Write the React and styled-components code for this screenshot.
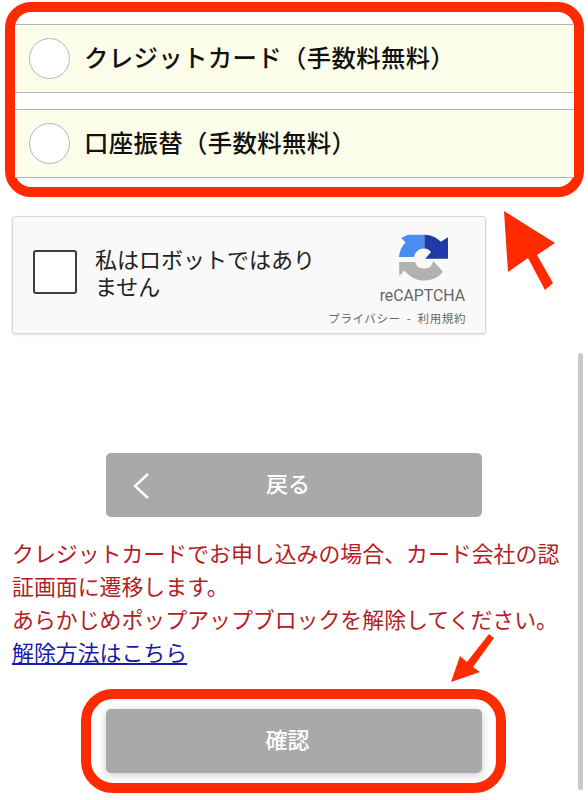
import React from "react";
import styled, { createGlobalStyle } from "styled-components";

const Global = createGlobalStyle`
  html, body {
    margin: 0;
    padding: 0;
    background: #fff;
  }
  * {
    box-sizing: border-box;
  }
`;

const Page = styled.div`
  position: relative;
  width: 588px;
  height: 800px;
  overflow: hidden;
  padding-top: 2px;
  background: #fff;
  font-family: "Noto Sans CJK JP", "Noto Sans", sans-serif;
`;

const Highlight = styled.div`
  border: 10px solid #ff2a00;
  border-radius: 26px;
  background: #fff;
`;

const PayFrame = styled(Highlight)`
  width: 579px;
  height: 195px;
  margin-left: 5px;
  padding-top: 12px;
  display: flex;
  flex-direction: column;
  gap: 16px;
`;

const PayRow = styled.label`
  height: 69px;
  display: flex;
  align-items: center;
  gap: 14px;
  padding-left: 14px;
  background: #fdfee9;
  border-top: 1px solid #b4b4b4;
  border-bottom: 1px solid #b4b4b4;
  font-size: 24.4px;
  font-weight: 500;
  letter-spacing: 0.35px;
  color: #111;
`;

const PayLabel = styled.span`
  margin-top: -4px;
  text-spacing-trim: space-all;
  white-space: nowrap;
`;

const Radio = styled.span`
  width: 41px;
  height: 41px;
  border-radius: 50%;
  background: #fff;
  border: 1px solid #b5b5b5;
  flex-shrink: 0;
`;

const Captcha = styled.div`
  width: 474px;
  height: 118px;
  margin: 19px 0 0 12px;
  padding: 33px 18px 0 20px;
  display: flex;
  background: #f9f9f9;
  border: 1px solid #d6d6d6;
  border-radius: 3px;
  box-shadow: 0 1px 3px rgba(0, 0, 0, 0.12);
`;

const CheckBox = styled.span`
  width: 44px;
  height: 44px;
  flex-shrink: 0;
  background: #fff;
  border: 2px solid #3f3f3f;
  border-radius: 3px;
`;

const CaptchaText = styled.div`
  width: 226px;
  margin: -5px 0 0 18px;
  font-size: 22px;
  line-height: 27px;
  color: #222;
`;

const CaptchaBrand = styled.div`
  position: relative;
  margin-left: auto;
  margin-top: -17px;
  display: flex;
  flex-direction: column;
  align-items: flex-end;
  color: #666;
`;

const LogoMark = styled.svg`
  margin-right: 19px;
`;

const BrandName = styled.div`
  font-family: Roboto, "Liberation Sans", sans-serif;
  font-size: 15.8px;
  line-height: 18px;
  margin-top: 5px;
  margin-right: 2px;
`;

const BrandLinks = styled.div`
  font-size: 11.5px;
  line-height: 16px;
  margin-top: 5px;
  margin-right: 1px;
  white-space: nowrap;
  word-spacing: 3px;
  letter-spacing: 0.6px;
`;

const GreyButton = styled.div`
  position: relative;
  width: 376px;
  height: 64px;
  padding: 0 12px 6px 0;
  display: flex;
  align-items: center;
  justify-content: center;
  background: #a9a9a9;
  border-radius: 5px;
  color: #fff;
  font-size: 22px;
  font-weight: 500;
`;

const BackButton = styled(GreyButton)`
  margin: 119px 0 0 106px;
`;

const Chevron = styled.svg`
  position: absolute;
  left: 26px;
  top: 19px;
`;

const Notice = styled.div`
  margin: 19px 0 0 12px;
  width: 552px;
  font-size: 21.9px;
  line-height: 33px;
  color: #b3201f;
`;

const HelpLink = styled.a`
  color: #1a1aa8;
  text-decoration: underline;
`;

const ConfirmFrame = styled(Highlight)`
  width: 425px;
  height: 104px;
  margin: 21px 0 0 81px;
  border-radius: 32px;
  display: flex;
  align-items: center;
  justify-content: center;
`;

const ConfirmButton = styled(GreyButton)`
  margin-top: -1px;
  box-shadow: 0 2px 8px rgba(0, 0, 0, 0.22);
`;

const Scrollbar = styled.div`
  position: absolute;
  left: 578px;
  top: 353px;
  width: 5px;
  height: 437px;
  background: #c9c9c9;
  border-radius: 3px;
`;

const ArrowLayer = styled.svg`
  position: absolute;
  left: 0;
  top: 0;
  pointer-events: none;
`;

function RecaptchaLogo() {
  return (
    <LogoMark width="49" height="49" viewBox="0 0 135 135">
      <path d="M0 66C1 50 8 36 18 26L6 14 25 5h45v38c-12 0-18 4-23 10-3 4-5 9-6 13z" fill="#4a8cf0" />
      <path d="M70 5c20 0 34 8 45 19l20-12v59H72l16-18c-3-6-10-10-18-10z" fill="#1f3aa6" />
      <path d="M0 80h45c2 8 4 12 12 16 8 4 22 2 30-4l8-14 26 29c-12 15-30 24-50 24-24 0-44-12-56-28L1 118z" fill="#b2b2b2" />
    </LogoMark>
  );
}

export default function App() {
  return (
    <Page>
      <Global />
      <PayFrame>
        <PayRow>
          <Radio />
          <PayLabel>クレジットカード（手数料無料）</PayLabel>
        </PayRow>
        <PayRow>
          <Radio />
          <PayLabel>口座振替（手数料無料）</PayLabel>
        </PayRow>
      </PayFrame>

      <Captcha>
        <CheckBox />
        <CaptchaText>私はロボットではありません</CaptchaText>
        <CaptchaBrand>
          <RecaptchaLogo />
          <BrandName>reCAPTCHA</BrandName>
          <BrandLinks>プライバシー - 利用規約</BrandLinks>
        </CaptchaBrand>
      </Captcha>

      <BackButton>
        <Chevron width="20" height="28" viewBox="0 0 20 28">
          <path d="M16 2L3 14l13 12" fill="none" stroke="#fff" strokeWidth="2.4" />
        </Chevron>
        戻る
      </BackButton>

      <Notice>
        クレジットカードでお申し込みの場合、カード会社の認証画面に遷移します。
        <br />
        あらかじめポップアップブロックを解除してください。
        <br />
        <HelpLink href="#">解除方法はこちら</HelpLink>
      </Notice>

      <ConfirmFrame>
        <ConfirmButton>確認</ConfirmButton>
      </ConfirmFrame>

      <Scrollbar />

      <ArrowLayer width="588" height="800" viewBox="0 0 588 800">
        <polygon points="504,211 555,243 537,255 553,283 545,290 528,258 508,272" fill="#ff2a00" />
        <polygon points="451,682 460,656 467,662 489,634 494,638 473,667 480,672" fill="#ff2a00" />
      </ArrowLayer>
    </Page>
  );
}
